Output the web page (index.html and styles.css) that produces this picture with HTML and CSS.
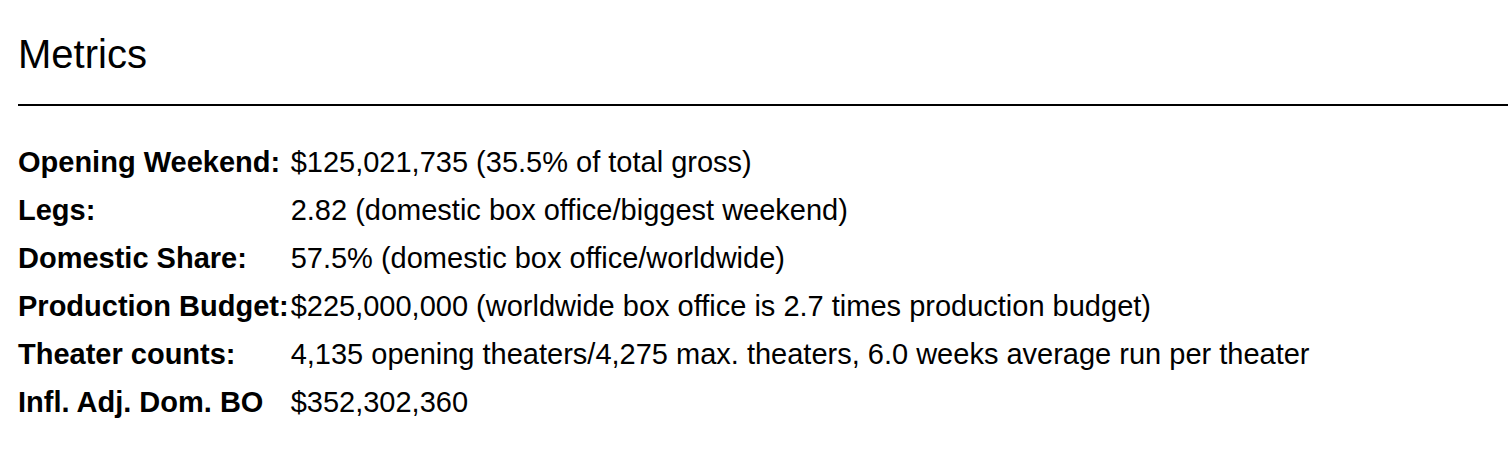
FILE: index.html
```html
<!DOCTYPE html>
<html lang="en">
<head>
<meta charset="utf-8">
<title>Metrics</title>
<link rel="stylesheet" href="styles.css">
</head>
<body>
<section class="metrics">
  <h2 class="metrics-title">Metrics</h2>
  <hr class="metrics-rule">
  <div class="metrics-table">
    <div class="label">Opening Weekend:</div>
    <div class="value">$125,021,735 (35.5% of total gross)</div>
    <div class="label">Legs:</div>
    <div class="value">2.82 (domestic box office/biggest weekend)</div>
    <div class="label">Domestic Share:</div>
    <div class="value">57.5% (domestic box office/worldwide)</div>
    <div class="label">Production Budget:</div>
    <div class="value">$225,000,000 (worldwide box office is 2.7 times production budget)</div>
    <div class="label">Theater counts:</div>
    <div class="value">4,135 opening theaters/4,275 max. theaters, 6.0 weeks average run per theater</div>
    <div class="label">Infl. Adj. Dom. BO</div>
    <div class="value">$352,302,360</div>
  </div>
</section>
</body>
</html>
```
FILE: styles.css
```css
html, body {
  margin: 0;
  padding: 0;
  background: #fff;
  color: #000;
  font-family: "Liberation Sans", Arial, Helvetica, sans-serif;
}

.metrics {
  padding: 31px 0 0 18px;
}

.metrics-title {
  margin: 0;
  font-size: 40px;
  font-weight: normal;
  line-height: 46px;
}

.metrics-rule {
  margin: 27px 0 0 0;
  border: 0;
  border-top: 2px solid #000;
  height: 0;
}

.metrics-table {
  margin-top: 32px;
  display: grid;
  grid-template-columns: max-content 1fr;
  column-gap: 2px;
  font-size: 29px;
  line-height: 48px;
}

.label {
  font-weight: bold;
}
```
